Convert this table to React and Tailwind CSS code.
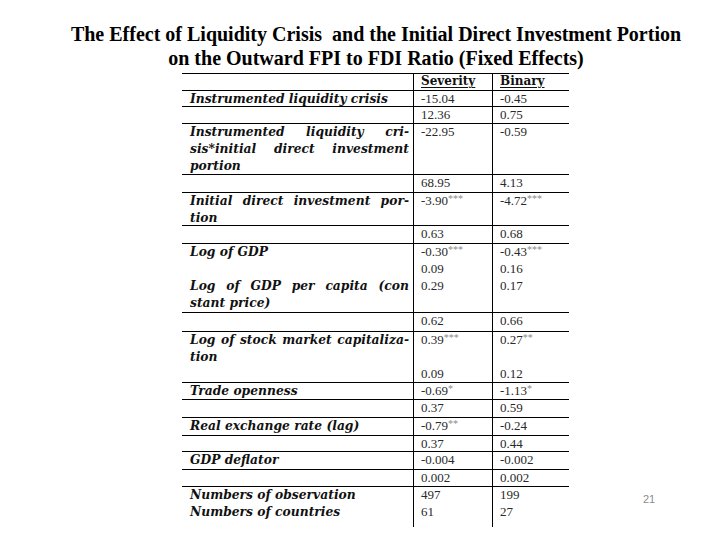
import React from "react";

const S = (v, s) => ({ v, s });

const groups = [
  { h: 17, header: true, left: [], c2: ["Severity"], c3: ["Binary"] },
  { h: 16, left: [{ t: "Instrumented liquidity crisis" }], c2: [S("-15.04")], c3: [S("-0.45")] },
  { h: 17, left: [], c2: [S("12.36")], c3: [S("0.75")] },
  {
    h: 51,
    left: [
      { t: "Instrumented liquidity cri-", j: true },
      { t: "sis*initial direct investment", j: true },
      { t: "portion" },
    ],
    c2: [S("-22.95")],
    c3: [S("-0.59")],
  },
  { h: 18, left: [], c2: [S("68.95")], c3: [S("4.13")] },
  {
    h: 33,
    left: [{ t: "Initial direct investment por-", j: true }, { t: "tion" }],
    c2: [S("-3.90", "***")],
    c3: [S("-4.72", "***")],
  },
  { h: 18, left: [], c2: [S("0.63")], c3: [S("0.68")] },
  {
    h: 69,
    left: [
      { t: "Log of GDP" },
      { t: "" },
      { t: "Log of GDP per capita (con", j: true },
      { t: "stant price)" },
    ],
    c2: [S("-0.30", "***"), S("0.09"), S("0.29")],
    c3: [S("-0.43", "***"), S("0.16"), S("0.17")],
  },
  { h: 19, left: [], c2: [S("0.62")], c3: [S("0.66")] },
  {
    h: 51,
    left: [{ t: "Log of stock market capitaliza-", j: true }, { t: "tion" }],
    c2: [S("0.39", "***"), S(""), S("0.09")],
    c3: [S("0.27", "**"), S(""), S("0.12")],
  },
  { h: 17, left: [{ t: "Trade openness" }], c2: [S("-0.69", "*")], c3: [S("-1.13", "*")] },
  { h: 18, left: [], c2: [S("0.37")], c3: [S("0.59")] },
  { h: 18, left: [{ t: "Real exchange rate (lag)" }], c2: [S("-0.79", "**")], c3: [S("-0.24")] },
  { h: 16, left: [], c2: [S("0.37")], c3: [S("0.44")] },
  { h: 18, left: [{ t: "GDP deflator" }], c2: [S("-0.004")], c3: [S("-0.002")] },
  { h: 17, left: [], c2: [S("0.002")], c3: [S("0.002")] },
  {
    h: 40,
    last: true,
    left: [{ t: "Numbers of observation" }, { t: "Numbers of countries" }],
    c2: [S("497"), S("61")],
    c3: [S("199"), S("27")],
  },
];

function NumCell({ items, header, className }) {
  return (
    <div className={"border-l border-black " + className}>
      <div className={"flex flex-col " + (header ? "mt-0" : "-mt-[1.5px]")}>
        {items.map((it, i) =>
          header ? (
            <div
              key={i}
              className="h-[15px] leading-[15px] font-['DejaVu_Serif',serif] font-bold text-[12px] text-[#111] underline underline-offset-[2px]"
            >
              {it}
            </div>
          ) : (
            <div
              key={i}
              className="h-[17px] leading-[17px] font-['Liberation_Serif',serif] text-[13px] text-[#2a2a2a] whitespace-nowrap"
            >
              {it.v}
              {it.s ? (
                <span className="relative top-[-3px] text-[10px] text-[#8a8a8a]">{it.s}</span>
              ) : null}
            </div>
          )
        )}
      </div>
    </div>
  );
}

export default function App() {
  return (
    <div className="w-[720px] h-[540px] bg-white overflow-hidden">
      <div className="pt-[22px] pl-[32px] text-center font-['Liberation_Serif',serif] font-bold text-[20px] leading-[24px] text-black">
        <div>The Effect of Liquidity Crisis&nbsp; and the Initial Direct Investment Portion</div>
        <div>on the Outward FPI to FDI Ratio (Fixed Effects)</div>
      </div>
      <div className="flex mt-[3px]">
        <div className="ml-[182px] w-[387px] border-t border-black">
          {groups.map((g, gi) => (
            <div
              key={gi}
              className={"flex box-border " + (g.last ? "" : "border-b border-black")}
              style={{ height: g.h }}
            >
              <div className="w-[231px] pl-2 pr-[4px]">
                <div className="flex flex-col -mt-[1.5px]">
                  {g.left.map((l, li) => (
                    <div
                      key={li}
                      className={
                        "h-[17px] leading-[17px] font-['DejaVu_Serif',serif] italic font-bold text-[12.3px] text-[#111] whitespace-nowrap " +
                        (l.j ? "text-justify [text-align-last:justify]" : "")
                      }
                    >
                      {l.t}
                    </div>
                  ))}
                </div>
              </div>
              <NumCell items={g.c2} header={g.header} className="w-[79px] pl-[7px]" />
              <NumCell items={g.c3} header={g.header} className="w-[77px] pl-[7px]" />
            </div>
          ))}
        </div>
        <div className="pl-[74px] pt-[418px] font-['Liberation_Sans',sans-serif] text-[11px] text-[#8c8c8c]">
          21
        </div>
      </div>
    </div>
  );
}
